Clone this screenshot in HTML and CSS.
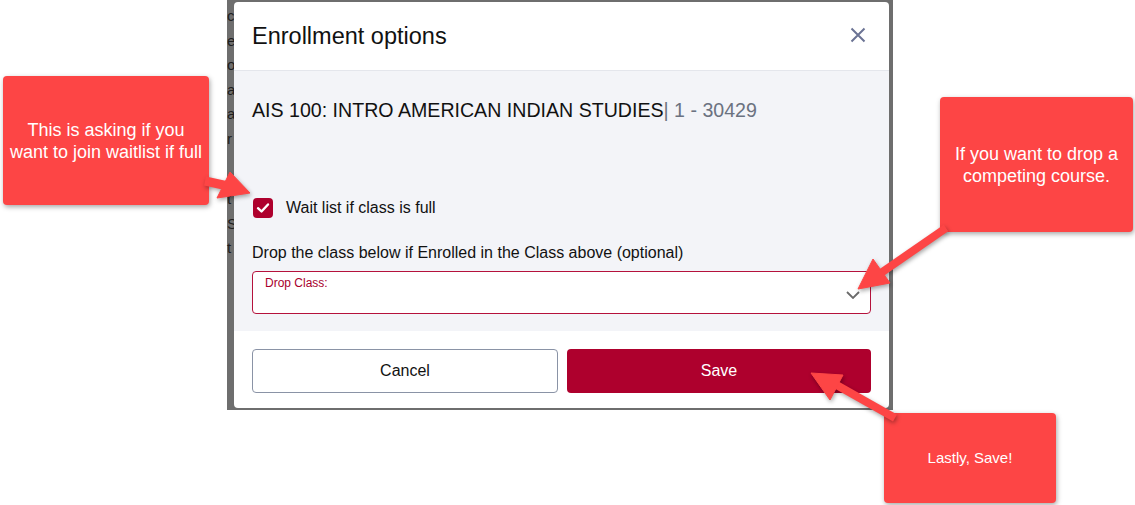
FILE: index.html
```html
<!DOCTYPE html>
<html lang="en">
<head>
  <meta charset="UTF-8">
  <meta name="viewport" content="width=device-width, initial-scale=1.0">
  <title>Enrollment options</title>
  <link rel="stylesheet" href="styles.css">
</head>
<body>
  <div class="stage">
    <div class="backdrop">
      <div class="page-behind">
        <span>c</span>
        <span>e</span>
        <span>o</span>
        <span>a</span>
        <span>a</span>
        <span>r</span>
        <span class="gap">t</span>
        <span>S</span>
        <span>t</span>
      </div>
      <div class="modal">
        <div class="modal-header">
          <h1>Enrollment options</h1>
          <svg class="close-icon" width="16" height="16" viewBox="0 0 16 16">
            <path d="M1.5 1.5 L14.5 14.5 M14.5 1.5 L1.5 14.5" stroke="#6b7394" stroke-width="2" fill="none"/>
          </svg>
        </div>
        <div class="modal-body">
          <p class="course">AIS 100: INTRO AMERICAN INDIAN STUDIES<span class="section">| 1 - 30429</span></p>
          <label class="check-row">
            <span class="checkbox">
              <svg width="20" height="20" viewBox="0 0 20 20">
                <path d="M5 10.2 L8.5 13.5 L15 6.5" stroke="#fff" stroke-width="2.4" fill="none" stroke-linecap="round" stroke-linejoin="round"/>
              </svg>
            </span>
            Wait list if class is full
          </label>
          <p class="drop-label">Drop the class below if Enrolled in the Class above (optional)</p>
          <div class="select">
            <span class="select-label">Drop Class:</span>
            <svg class="chevron" width="14" height="8" viewBox="0 0 14 8">
              <path d="M1 1 L7 7 L13 1" stroke="#6b6b6b" stroke-width="1.8" fill="none"/>
            </svg>
          </div>
        </div>
        <div class="modal-footer">
          <button class="btn btn-cancel">Cancel</button>
          <button class="btn btn-save">Save</button>
        </div>
      </div>
    </div>

    <div class="callout callout-waitlist">This is asking if you<br>want to join waitlist if full</div>
    <div class="callout callout-drop">If you want to drop a<br>competing course.</div>
    <div class="callout callout-save">Lastly, Save!</div>

    <svg class="arrows" width="1135" height="505" viewBox="0 0 1135 505">
      <g fill="#fd4545" stroke="#fd4545" class="arrow-set">
        <line x1="205" y1="181" x2="228" y2="186" stroke-width="9"/>
        <polygon points="230,172 250,193 217,198" stroke-width="1"/>
        <line x1="946" y1="228" x2="878" y2="275" stroke-width="8"/>
        <polygon points="873,259 858,289 890,283" stroke-width="1"/>
        <line x1="895" y1="418" x2="833" y2="383" stroke-width="8"/>
        <polygon points="811,373 843,375 830,400" stroke-width="1"/>
      </g>
    </svg>
  </div>
</body>
</html>
```

FILE: styles.css
```css
body {
  margin: 0;
  background-color: #fff;
  font-family: 'Liberation Sans', Arial, sans-serif;
}

.stage {
  position: relative;
  width: 1135px;
  height: 505px;
  overflow: hidden;
}

.backdrop {
  display: flex;
  margin-left: 227px;
  width: 666px;
  height: 410px;
  background-color: #6e6e6e;
}

.page-behind {
  width: 7px;
  display: flex;
  flex-direction: column;
  padding-top: 4px;
  font-size: 15px;
  line-height: 24.5px;
  color: #1e1e1e;
  white-space: nowrap;
}

.page-behind .gap {
  margin-top: 36px;
}

.modal {
  width: 655px;
  height: 406px;
  margin-top: 2px;
  background-color: #fff;
  border-radius: 4px;
  overflow: hidden;
  display: flex;
  flex-direction: column;
}

.modal-header {
  height: 68px;
  border-bottom: 1px solid #e4e6ec;
  display: flex;
  align-items: center;
  justify-content: space-between;
  padding: 0 23px 0 18px;
}

.modal-header h1 {
  margin: 0;
  font-size: 23.5px;
  font-weight: normal;
  color: #111;
}

.close-icon {
  margin-top: -2px;
}

.modal-body {
  height: 260px;
  background-color: #f3f4f8;
  padding: 0 18px;
  box-sizing: border-box;
}

.course {
  margin: 28px 0 0;
  font-size: 19.6px;
  color: #111;
}

.course .section {
  color: #6b7280;
}

.check-row {
  display: flex;
  align-items: center;
  gap: 13px;
  margin-top: 76px;
  margin-left: 1px;
  font-size: 16px;
  color: #111;
}

.checkbox {
  width: 20px;
  height: 20px;
  border-radius: 4px;
  background-color: #ae002d;
  display: flex;
}

.drop-label {
  margin: 26px 0 0;
  font-size: 16px;
  color: #111;
}

.select {
  margin-top: 9px;
  height: 43px;
  border: 1px solid #b5123c;
  border-radius: 4px;
  background-color: #fff;
  box-sizing: border-box;
  display: flex;
  justify-content: space-between;
  padding: 4px 10px 0 12px;
}

.select-label {
  font-size: 12px;
  color: #a8002c;
}

.chevron {
  margin-top: 15px;
}

.modal-footer {
  flex: 1;
  display: flex;
  gap: 9px;
  padding: 18px 18px 0;
}

.btn {
  flex: 1;
  height: 44px;
  border-radius: 4px;
  font-family: inherit;
  font-size: 16px;
}

.btn-cancel {
  background-color: #fff;
  border: 1px solid #8a93a6;
  color: #111;
}

.btn-save {
  background-color: #ae002d;
  border: none;
  color: #fff;
}

.callout {
  position: absolute;
  display: flex;
  align-items: center;
  justify-content: center;
  text-align: center;
  background-color: #fd4545;
  color: #fff;
  border-radius: 4px;
  box-shadow: 1px 2px 5px rgba(0, 0, 0, 0.35);
  font-size: 18px;
  line-height: 22px;
}

.callout-waitlist {
  left: 3px;
  top: 76px;
  width: 206px;
  height: 129px;
}

.callout-drop {
  left: 940px;
  top: 97px;
  width: 193px;
  height: 135px;
}

.callout-save {
  left: 884px;
  top: 413px;
  width: 172px;
  height: 90px;
  font-size: 15px;
}

.arrows {
  position: absolute;
  left: 0;
  top: 0;
  pointer-events: none;
}

.arrow-set {
  filter: drop-shadow(1px 2px 2px rgba(0, 0, 0, 0.35));
}
```
